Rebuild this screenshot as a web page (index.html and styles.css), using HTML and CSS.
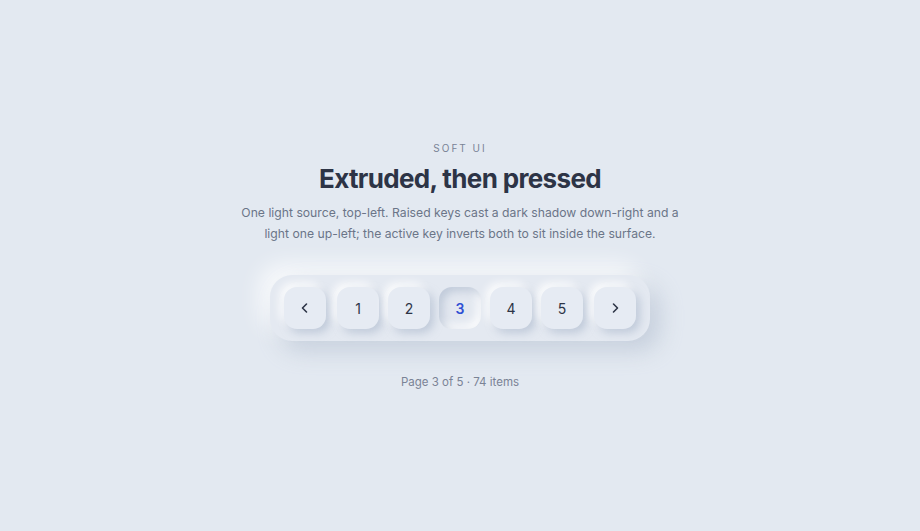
FILE: index.html
```html
<!DOCTYPE html>
<html lang="en">
    <head>
        <meta charset="UTF-8" />
        <meta name="viewport" content="width=device-width, initial-scale=1.0" />
        <title>Soft UI - Pagination</title>
        <link rel="stylesheet" href="styles.css">
    </head>
    <body>
        <main class="page">
            <p class="eyebrow">SOFT UI</p>
            <h1>Extruded, then pressed</h1>
            <p class="lead">
                One light source, top-left. Raised keys cast a dark shadow down-right and a
                light one up-left; the active key inverts both to sit inside the surface.
            </p>

            <nav class="pager" aria-label="Pagination">
                <button class="key key_arrow key_prev" aria-label="Previous page">
                    <svg width="14" height="14" viewBox="0 0 14 14" fill="none">
                        <path d="M8.5 3 L4.5 7 L8.5 11" stroke="currentColor" stroke-width="1.6" stroke-linecap="round" stroke-linejoin="round" />
                    </svg>
                </button>
                <button class="key">1</button>
                <button class="key">2</button>
                <button class="key key_active" aria-current="page">3</button>
                <button class="key">4</button>
                <button class="key">5</button>
                <button class="key key_arrow key_next" aria-label="Next page">
                    <svg width="14" height="14" viewBox="0 0 14 14" fill="none">
                        <path d="M5.5 3 L9.5 7 L5.5 11" stroke="currentColor" stroke-width="1.6" stroke-linecap="round" stroke-linejoin="round" />
                    </svg>
                </button>
            </nav>

            <p class="status">Page 3 of 5 &middot; 74 items</p>
        </main>
    </body>
</html>
```
FILE: styles.css
```css
body {
    margin: 0;
    font-family: "Inter", "Noto Sans", sans-serif;
    background: #e3e9f1;
    color: #2d3446;
}

.page {
    display: flex;
    flex-direction: column;
    align-items: center;
    justify-content: center;
    height: 100vh;
    text-align: center;
    box-sizing: border-box;
}

.eyebrow {
    margin: 0;
    font-size: 10px;
    letter-spacing: 0.2em;
    color: #7a8396;
}

h1 {
    margin: 9px 0 0;
    font-size: 26px;
    font-weight: 700;
    letter-spacing: -0.025em;
    color: #2d3446;
}

.lead {
    margin: 8px 0 0;
    max-width: 450px;
    font-size: 12.2px;
    line-height: 21px;
    color: #6b7588;
}

/* the tray the keys sit on */
.pager {
    display: flex;
    align-items: center;
    gap: 9px;
    margin-top: 31px;
    padding: 12px 14px;
    border-radius: 22px;
    background: #e4e9f1;
    box-shadow: 10px 10px 22px rgba(163, 177, 198, 0.45),
        -10px -10px 22px rgba(255, 255, 255, 0.8);
}

.key {
    display: flex;
    align-items: center;
    justify-content: center;
    width: 42px;
    height: 42px;
    padding: 0;
    border: none;
    border-radius: 13px;
    background: #e6ebf3;
    font-family: inherit;
    font-size: 14px;
    color: #2d3446;
    cursor: pointer;
    box-shadow: 4px 4px 9px rgba(163, 177, 198, 0.55),
        -4px -4px 9px rgba(255, 255, 255, 0.9);
}

.key_prev {
    margin-right: 2px;
}

.key_next {
    margin-left: 2px;
}

.key_active {
    background: #e3e8f0;
    color: #2f50d4;
    font-weight: 600;
    box-shadow: inset 4px 4px 8px rgba(163, 177, 198, 0.55),
        inset -4px -4px 8px rgba(255, 255, 255, 0.9);
}

.status {
    margin: 34px 0 0;
    font-size: 11.5px;
    color: #7a8396;
}
```
